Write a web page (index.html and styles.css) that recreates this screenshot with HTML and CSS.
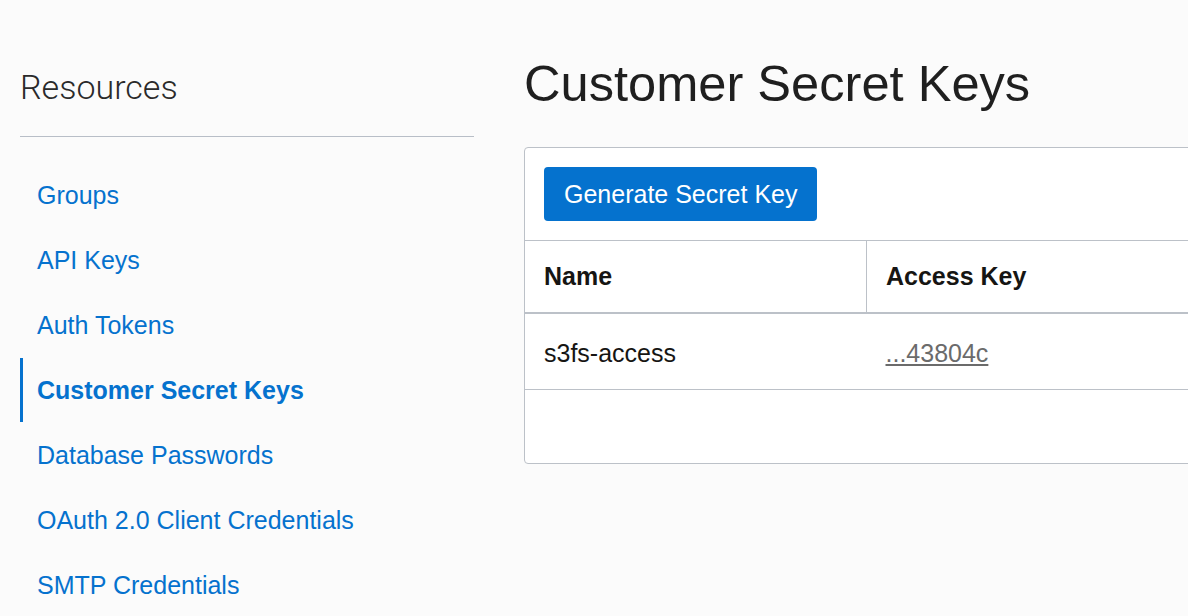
FILE: index.html
```html
<!DOCTYPE html>
<html lang="en">
<head>
  <meta charset="UTF-8" />
  <meta name="viewport" content="width=device-width, initial-scale=1.0"/>
  <title>Customer Secret Keys</title>
  <link rel="stylesheet" href="styles.css">
</head>
<body>
  <div class="page">
    <aside class="sidebar">
      <h3 class="sidebar-title">Resources</h3>
      <ul class="nav">
        <li><a href="#">Groups</a></li>
        <li><a href="#">API Keys</a></li>
        <li><a href="#">Auth Tokens</a></li>
        <li class="active"><a href="#">Customer Secret Keys</a></li>
        <li><a href="#">Database Passwords</a></li>
        <li><a href="#">OAuth 2.0 Client Credentials</a></li>
        <li><a href="#">SMTP Credentials</a></li>
      </ul>
    </aside>

    <main class="content">
      <h1>Customer Secret Keys</h1>
      <div class="card">
        <div class="toolbar">
          <button class="btn-primary">Generate Secret Key</button>
        </div>
        <table class="keys">
          <thead>
            <tr>
              <th class="col-name">Name</th>
              <th>Access Key</th>
            </tr>
          </thead>
          <tbody>
            <tr>
              <td>s3fs-access</td>
              <td><a class="key-link" href="#">...43804c</a></td>
            </tr>
          </tbody>
        </table>
        <div class="card-footer"></div>
      </div>
    </main>
  </div>
</body>
</html>
```

FILE: styles.css
```css
html, body {
  margin: 0;
  padding: 0;
  overflow: hidden;
}

body {
  font-family: "Liberation Sans", Arial, sans-serif;
  background: #fbfbfb;
  color: #161513;
}

.page {
  display: flex;
  gap: 50px;
  padding-left: 20px;
}

/* left resources menu */
.sidebar {
  width: 454px;
  flex-shrink: 0;
}

.sidebar-title {
  margin: 67px 0 0;
  padding-bottom: 29px;
  border-bottom: 1px solid #b8bec7;
  font-family: Roboto, "Liberation Sans", sans-serif;
  font-weight: 300;
  font-size: 34px;
  line-height: 40px;
  color: #2a2a2a;
}

.nav {
  list-style: none;
  margin: 26px 0 0;
  padding: 0;
}

.nav li {
  height: 64px;
  margin-bottom: 1px;
  border-left: 3px solid transparent;
  padding-left: 14px;
  display: flex;
  align-items: center;
}

.nav a {
  font-size: 25px;
  color: #0572ce;
  text-decoration: none;
}

.nav li.active {
  border-left-color: #0572ce;
}

.nav li.active a {
  font-weight: bold;
}

/* main area */
.content {
  flex: 1;
  min-width: 0;
  padding-top: 55px;
}

.content h1 {
  margin: 0 0 34px;
  font-size: 50.6px;
  font-weight: normal;
  line-height: 58px;
  color: #1f1f1f;
}

.card {
  width: 1000px;
  background: #ffffff;
  border: 1px solid #bcc1c8;
  border-radius: 4px;
}

.toolbar {
  padding: 19px;
}

.btn-primary {
  height: 54px;
  padding: 0 20px;
  background: #0572ce;
  color: #ffffff;
  border: none;
  border-radius: 4px;
  font-family: "Liberation Sans", Arial, sans-serif;
  font-size: 25px;
  cursor: pointer;
}

.keys {
  width: 100%;
  border-collapse: collapse;
}

.keys th,
.keys td {
  text-align: left;
  padding: 0 19px;
  font-size: 25px;
}

.keys th {
  height: 71px;
  font-weight: bold;
  border-top: 1px solid #bcc1c8;
  border-bottom: 2px solid #bcc1c8;
}

.keys th.col-name {
  width: 303px;
  border-right: 1px solid #bcc1c8;
}

.keys td {
  height: 72px;
  padding-top: 3px;
  border-bottom: 1px solid #bcc1c8;
}

.key-link {
  color: #6b6b6b;
}

.card-footer {
  height: 73px;
}
```
